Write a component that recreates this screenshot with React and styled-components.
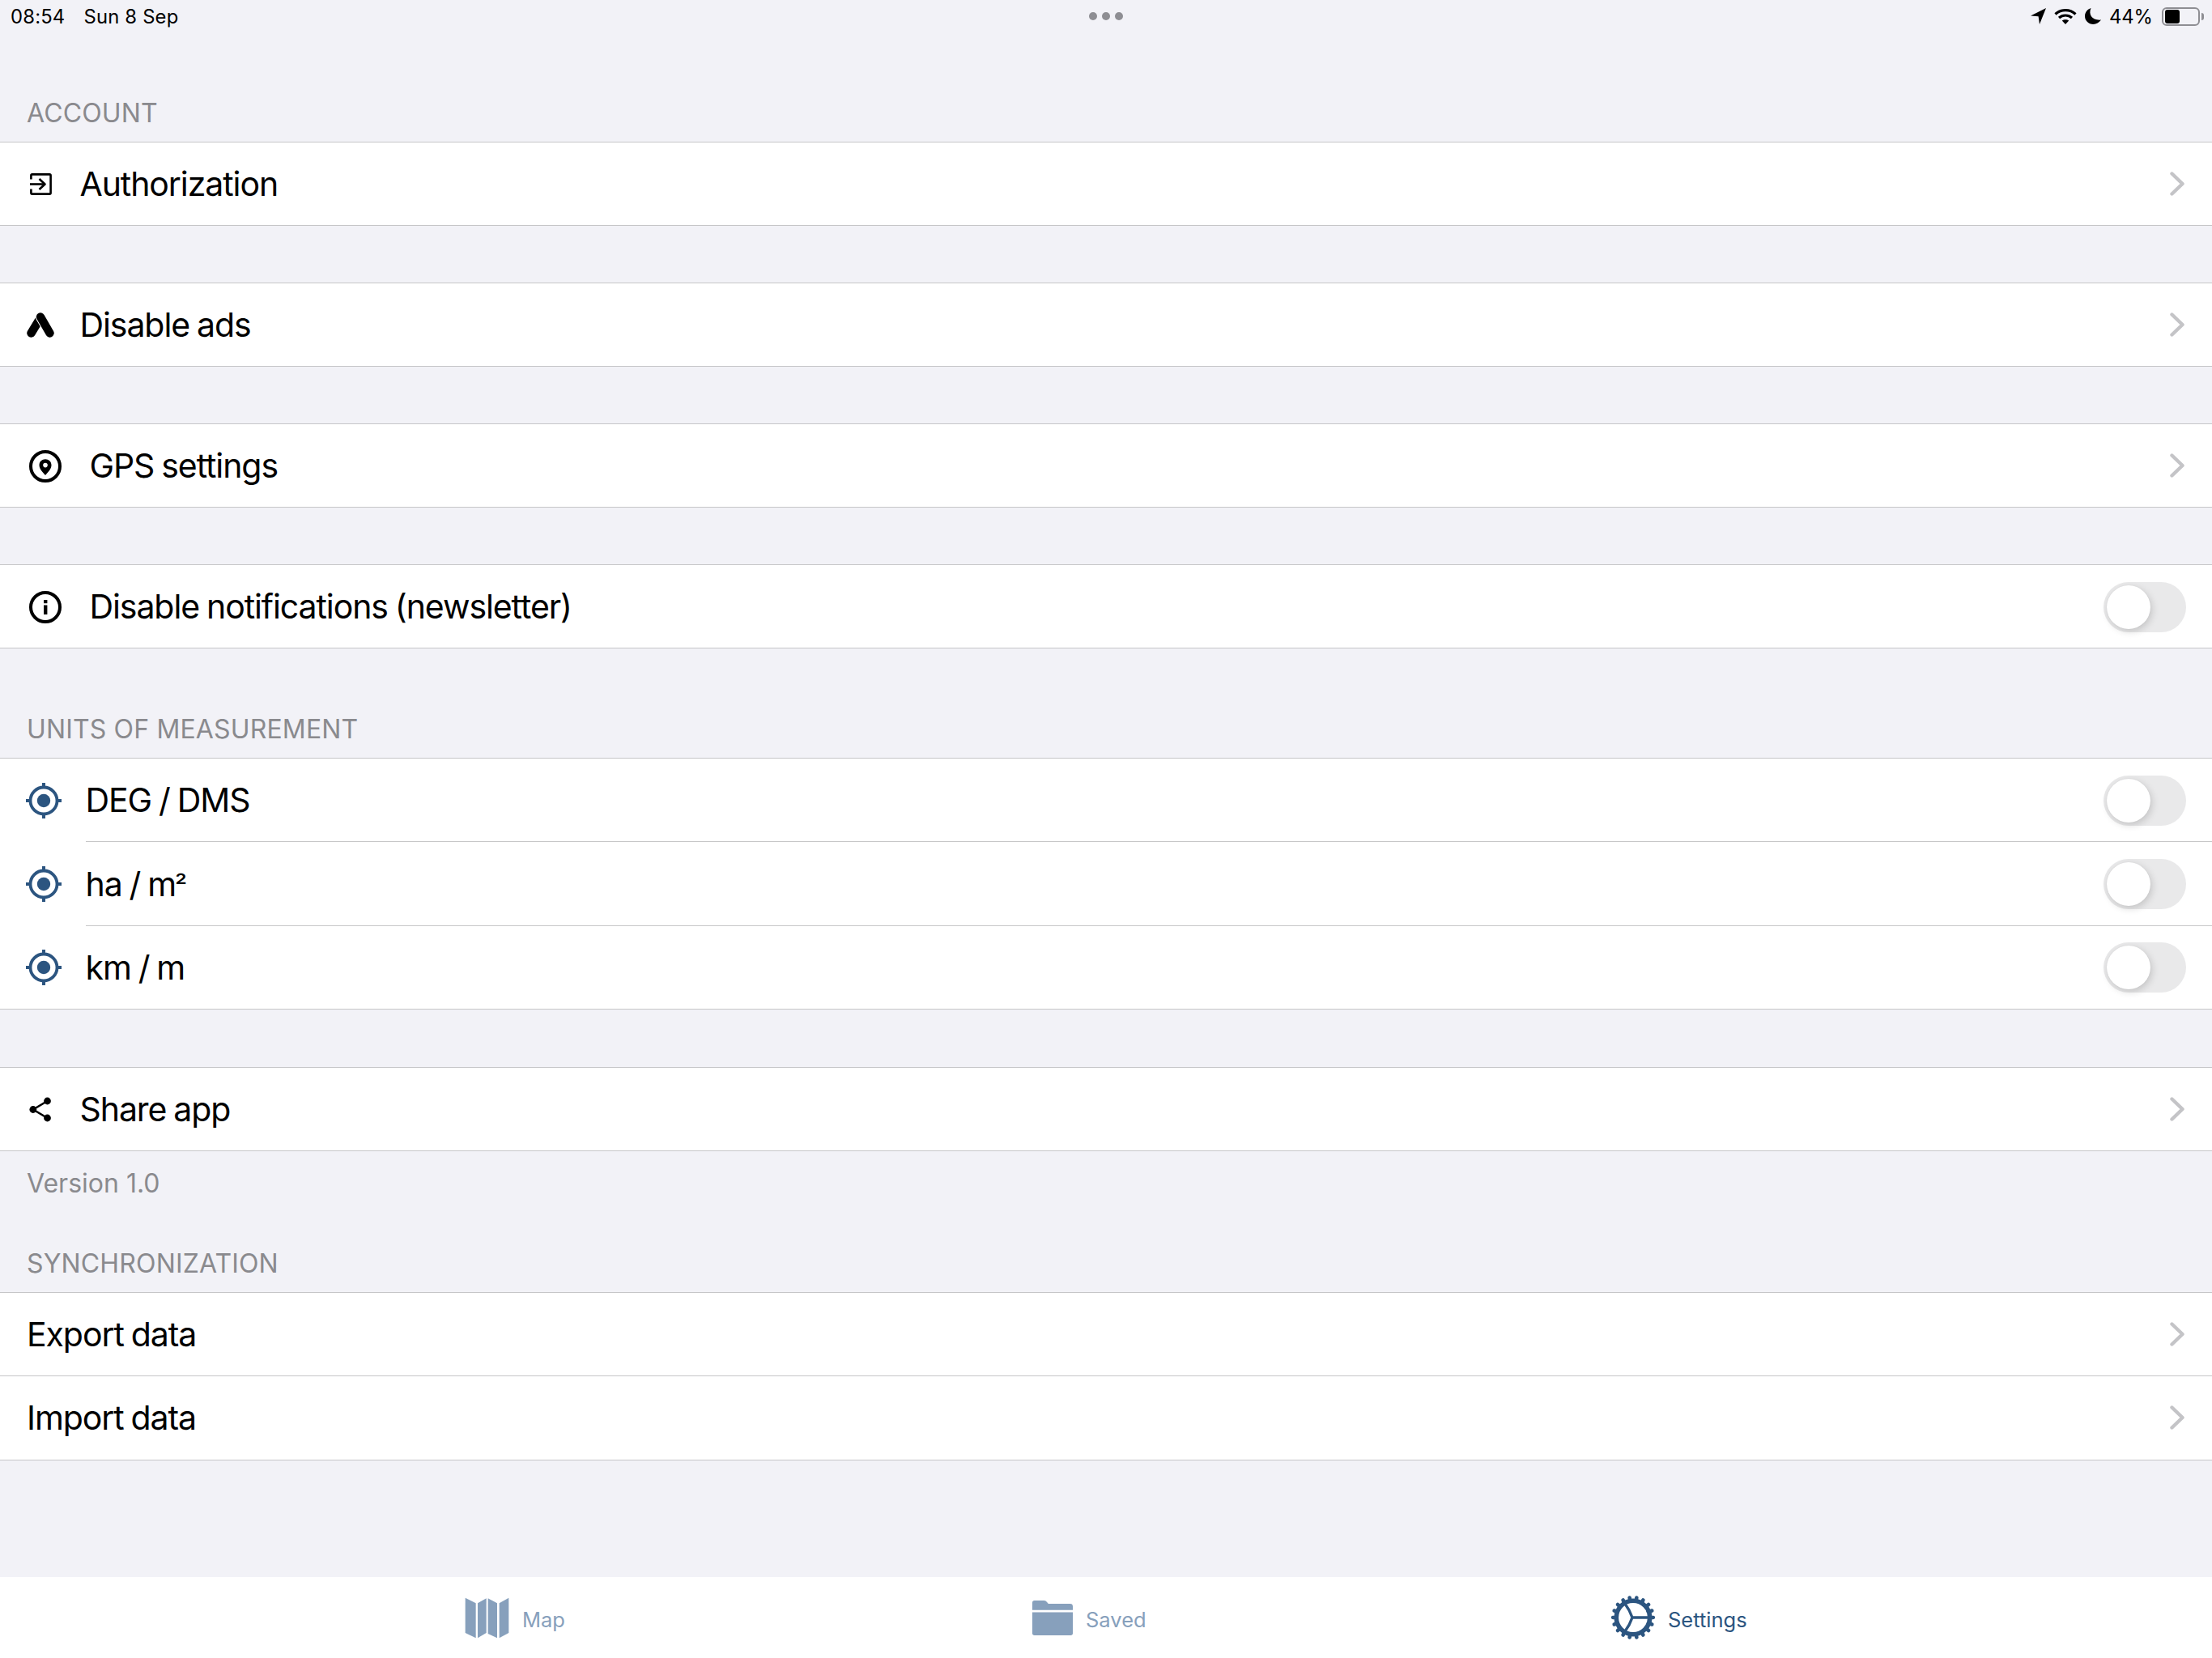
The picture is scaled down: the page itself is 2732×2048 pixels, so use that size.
import React from "react";
import styled, { createGlobalStyle } from "styled-components";

const GlobalStyle = createGlobalStyle`
html, body {
  margin: 0;
  padding: 0;
  background: #f2f2f7;
}
`;

const Page = styled.div`
width: 2732px;
height: 2048px;
display: flex;
flex-direction: column;
background: #f2f2f7;
font-family: Inter, "Liberation Sans", sans-serif;
color: #000;
overflow: hidden;
`;

const StatusBar = styled.div`
height: 40.4px;
display: grid;
grid-template-columns: 1fr auto 1fr;
align-items: center;
padding: 0 13px;
font-size: 23.8px;
`;

const StatusLeft = styled.div`
display: flex;
gap: 23px;
letter-spacing: 0.2px;
`;

const Dots = styled.div`
display: flex;
gap: 6px;
`;

const Dot = styled.span`
width: 10px;
height: 10px;
border-radius: 50%;
background: #8e8e93;
`;

const StatusRight = styled.div`
display: flex;
align-items: center;
justify-content: flex-end;
gap: 10px;
`;

const Battery = styled.div`
width: 47px;
height: 23px;
box-sizing: border-box;
margin: 0 2px 0 1px;
padding: 1px 2px;
border: 2px solid #8e8e93;
border-radius: 6px;
position: relative;
&::after {
  content: "";
  position: absolute;
  right: -7px;
  top: 5px;
  width: 3px;
  height: 9px;
  background: #8e8e93;
  border-radius: 0 3px 3px 0;
}
`;

const BatteryFill = styled.div`
width: 18px;
height: 100%;
background: #000;
border-radius: 3px;
`;

const SectionHeader = styled.div`
height: ${({ $height }) => $height || 134.6}px;
box-sizing: border-box;
padding: 0 0 16px 33px;
display: flex;
align-items: flex-end;
font-size: 32px;
letter-spacing: 0.15px;
line-height: 38px;
color: #8a8a8e;
`;

const Group = styled.div`
background: #fff;
border-top: 1px solid #c6c6c8;
margin-top: ${({ $gap }) => $gap || 0}px;
`;

const Row = styled.div`
height: 103.4px;
display: flex;
align-items: stretch;
&:last-child {
  box-shadow: inset 0 -1px 0 #c6c6c8;
}
`;

const IconSlot = styled.div`
width: ${({ $width }) => $width}px;
margin-right: -1.5px;
flex-shrink: 0;
display: flex;
align-items: center;
justify-content: center;
`;

const RowBody = styled.div`
flex: 1;
display: flex;
align-items: center;
justify-content: space-between;
padding-right: 32px;
padding-left: ${({ $inset }) => $inset || 0}px;
box-shadow: ${({ $divider }) => ($divider ? "inset 0 -1px 0 #c6c6c8" : "none")};
`;

const Label = styled.span`
font-size: 41px;
letter-spacing: -1.08px;
word-spacing: -1.5px;
line-height: 48px;
margin-bottom: 1px;
`;

const Superscript = styled.span`
font-size: 34px;
line-height: 0;
margin-left: -1px;
`;

const Toggle = styled.div`
width: 102px;
height: 62px;
box-sizing: border-box;
padding: 4px;
border-radius: 31px;
background: #e9e9ea;
`;

const Knob = styled.div`
width: 54px;
height: 54px;
border-radius: 50%;
background: #fff;
box-shadow: 2px 3px 10px rgba(0, 0, 0, 0.16), 0 0 1px rgba(0, 0, 0, 0.1);
`;

const Footer = styled.div`
height: 70px;
box-sizing: border-box;
padding: 20px 0 0 33px;
font-size: 32px;
line-height: 40px;
color: #8a8a8e;
`;

const TabBar = styled.div`
margin-top: auto;
height: 100px;
background: #fff;
display: flex;
align-items: center;
padding: 0 0 0 574px;
box-sizing: border-box;
`;

const Tab = styled.div`
width: ${({ $width }) => $width}px;
display: flex;
align-items: center;
gap: 16px;
font-size: 25.5px;
color: ${({ $active }) => ($active ? "#2c5580" : "#87a0bc")};
`;

const TabLabel = styled.span`
margin-top: 5px;
`;

const ChevronSvg = styled.svg`
margin: 0 2px 2px 0;
`;

const LocationIcon = () => (
  <svg width="19" height="20" viewBox="0 0 19 20" fill="#000">
    <path d="M19 0 L0 9.5 L9.6 10.2 L11 20 Z" />
  </svg>
);

const WifiIcon = () => (
  <svg width="28" height="20" viewBox="0 0 28 20" fill="none" stroke="#000" strokeWidth="3.2">
    <path d="M1.5 7.5 C8.5 1 19.5 1 26.5 7.5" />
    <path d="M6 12 C10.5 8 17.5 8 22 12" />
    <path d="M14 20 L9.8 15.6 C12 13.8 16 13.8 18.2 15.6 Z" fill="#000" stroke="none" />
  </svg>
);

const MoonIcon = () => (
  <svg width="20" height="20" viewBox="0 0 20 20" fill="#000">
    <path d="M7.5 0 C4 8 9 15.5 20 14.6 C17.6 18 14 20 10.5 20 C4.5 20 0 15.5 0 10 C0 5.5 3 1.4 7.5 0 Z" />
  </svg>
);

const ChevronIcon = () => (
  <ChevronSvg width="18" height="30" viewBox="0 0 18 30" fill="none" stroke="#c4c4c7" strokeWidth="4.4" strokeLinecap="round" strokeLinejoin="round">
    <path d="M2.5 2.5 L15.5 15 L2.5 27.5" />
  </ChevronSvg>
);

const LoginIcon = () => (
  <svg width="27" height="27" viewBox="0 0 27 27" fill="none" stroke="#000" strokeWidth="2.6" strokeLinejoin="round">
    <path d="M1.4 7.5 V2.8 Q1.4 1.4 2.8 1.4 H24.2 Q25.6 1.4 25.6 2.8 V24.2 Q25.6 25.6 24.2 25.6 H2.8 Q1.4 25.6 1.4 24.2 V19.5" />
    <path d="M0 13.5 H18" />
    <path d="M11.5 7 L18.5 13.5 L11.5 20" />
  </svg>
);

const AdsIcon = () => (
  <svg width="34" height="31" viewBox="0 0 34 31" fill="none" strokeLinecap="round">
    <path d="M15.5 9 L5.5 25.5" stroke="#000" strokeWidth="10.5" />
    <path d="M17 6 L28.5 25.5" stroke="#fff" strokeWidth="12" />
    <path d="M17 5.5 L28.5 25.5" stroke="#000" strokeWidth="10.5" />
  </svg>
);

const GpsIcon = () => (
  <svg width="40" height="40" viewBox="0 0 40 40">
    <circle cx="20" cy="20" r="18" fill="none" stroke="#000" strokeWidth="4" />
    <path fillRule="evenodd" d="M20 31 C15.5 26 12.5 22.5 12.5 18.5 C12.5 14.2 15.8 11.2 20 11.2 C24.2 11.2 27.5 14.2 27.5 18.5 C27.5 22.5 24.5 26 20 31 Z M20 15.8 A2.8 2.8 0 1 0 20 21.4 A2.8 2.8 0 1 0 20 15.8 Z" />
  </svg>
);

const InfoIcon = () => (
  <svg width="40" height="40" viewBox="0 0 40 40">
    <circle cx="20" cy="20" r="18" fill="none" stroke="#000" strokeWidth="4" />
    <rect x="18" y="17.5" width="4.4" height="11.5" />
    <rect x="18" y="11" width="4.4" height="4.2" />
  </svg>
);

const TargetIcon = () => (
  <svg width="44" height="44" viewBox="0 0 44 44" fill="none" stroke="#2c5580">
    <circle cx="22" cy="22" r="16.5" strokeWidth="3.8" />
    <circle cx="22" cy="22" r="8.2" fill="#2c5580" stroke="none" />
    <path d="M22 0 V7 M22 37 V44 M0 22 H7 M37 22 H44" strokeWidth="4" />
  </svg>
);

const ShareIcon = () => (
  <svg width="28" height="31" viewBox="0 0 28 31" fill="#000" stroke="#000">
    <path d="M22.5 5 L5 15.5 L22.5 26" fill="none" strokeWidth="2.6" />
    <circle cx="22.5" cy="5" r="4.4" stroke="none" />
    <circle cx="4.8" cy="15.5" r="4.4" stroke="none" />
    <circle cx="22.5" cy="26" r="4.4" stroke="none" />
  </svg>
);

const MapIcon = () => (
  <svg width="55" height="51" viewBox="100 133 165 153" fill="#87a0bc">
    <polygon points="102,135 141,155 141,284 102,265" />
    <polygon points="148,155 180,137 180,265 148,284" />
    <polygon points="186,137 220,155 220,284 186,268" />
    <polygon points="228,155 263,135 263,265 228,284" />
  </svg>
);

const FolderIcon = () => (
  <svg width="50" height="43" viewBox="77 142 149 128" fill="#87a0bc">
    <path d="M77 177 V150 Q77 142 85 142 H120 Q127 142 131 148 L136 154 H216 Q226 154 226 164 V177 Z" />
    <path d="M77 185 H226 V262 Q226 270 218 270 H85 Q77 270 77 262 Z" />
  </svg>
);

const teeth = Array.from({ length: 18 }, (_, i) => i * 20);

const GearIcon = () => (
  <svg width="54" height="54" viewBox="0 0 54 54" fill="none" stroke="#2c5580">
    <circle cx="27" cy="27" r="20.7" strokeWidth="5.6" />
    {teeth.map((a) => (
      <path key={a} d="M27 2.2 V6" strokeWidth="4.6" strokeLinecap="round" transform={`rotate(${a + 10} 27 27)`} />
    ))}
    <path d="M26 27 H46 M26 27 Q23 18 17 10 M26 27 Q23 36 17 44" strokeWidth="3.4" />
  </svg>
);

const NavRow = ({ icon, slot, label, last }) => (
  <Row>
    {icon && <IconSlot $width={slot}>{icon}</IconSlot>}
    <RowBody $inset={icon ? 0 : 33} $divider={!last}>
      <Label>{label}</Label>
      <ChevronIcon />
    </RowBody>
  </Row>
);

const SwitchRow = ({ icon, slot, label, last }) => (
  <Row>
    <IconSlot $width={slot}>{icon}</IconSlot>
    <RowBody $divider={!last}>
      <Label>{label}</Label>
      <Toggle>
        <Knob />
      </Toggle>
    </RowBody>
  </Row>
);

export default function App() {
  return (
    <Page>
      <GlobalStyle />
      <StatusBar>
        <StatusLeft>
          <span>08:54</span>
          <span>Sun 8 Sep</span>
        </StatusLeft>
        <Dots>
          <Dot />
          <Dot />
          <Dot />
        </Dots>
        <StatusRight>
          <LocationIcon />
          <WifiIcon />
          <MoonIcon />
          <span>44%</span>
          <Battery>
            <BatteryFill />
          </Battery>
        </StatusRight>
      </StatusBar>

      <SectionHeader>ACCOUNT</SectionHeader>
      <Group>
        <NavRow icon={<LoginIcon />} slot={100} label="Authorization" last />
      </Group>
      <Group $gap={69.6}>
        <NavRow icon={<AdsIcon />} slot={100} label="Disable ads" last />
      </Group>
      <Group $gap={69.6}>
        <NavRow icon={<GpsIcon />} slot={112} label="GPS settings" last />
      </Group>
      <Group $gap={69.6}>
        <SwitchRow icon={<InfoIcon />} slot={112} label="Disable notifications (newsletter)" last />
      </Group>

      <SectionHeader>UNITS OF MEASUREMENT</SectionHeader>
      <Group>
        <SwitchRow icon={<TargetIcon />} slot={107} label="DEG / DMS" />
        <SwitchRow icon={<TargetIcon />} slot={107} label={<>ha / m<Superscript>²</Superscript></>} />
        <SwitchRow icon={<TargetIcon />} slot={107} label="km / m" last />
      </Group>

      <Group $gap={70.8}>
        <NavRow icon={<ShareIcon />} slot={100} label="Share app" last />
      </Group>
      <Footer>Version 1.0</Footer>

      <SectionHeader $height={103.6}>SYNCHRONIZATION</SectionHeader>
      <Group>
        <NavRow label="Export data" />
        <NavRow label="Import data" last />
      </Group>

      <TabBar>
        <Tab $width={701}>
          <MapIcon />
          <TabLabel>Map</TabLabel>
        </Tab>
        <Tab $width={715}>
          <FolderIcon />
          <TabLabel>Saved</TabLabel>
        </Tab>
        <Tab $active>
          <GearIcon />
          <TabLabel>Settings</TabLabel>
        </Tab>
      </TabBar>
    </Page>
  );
}
